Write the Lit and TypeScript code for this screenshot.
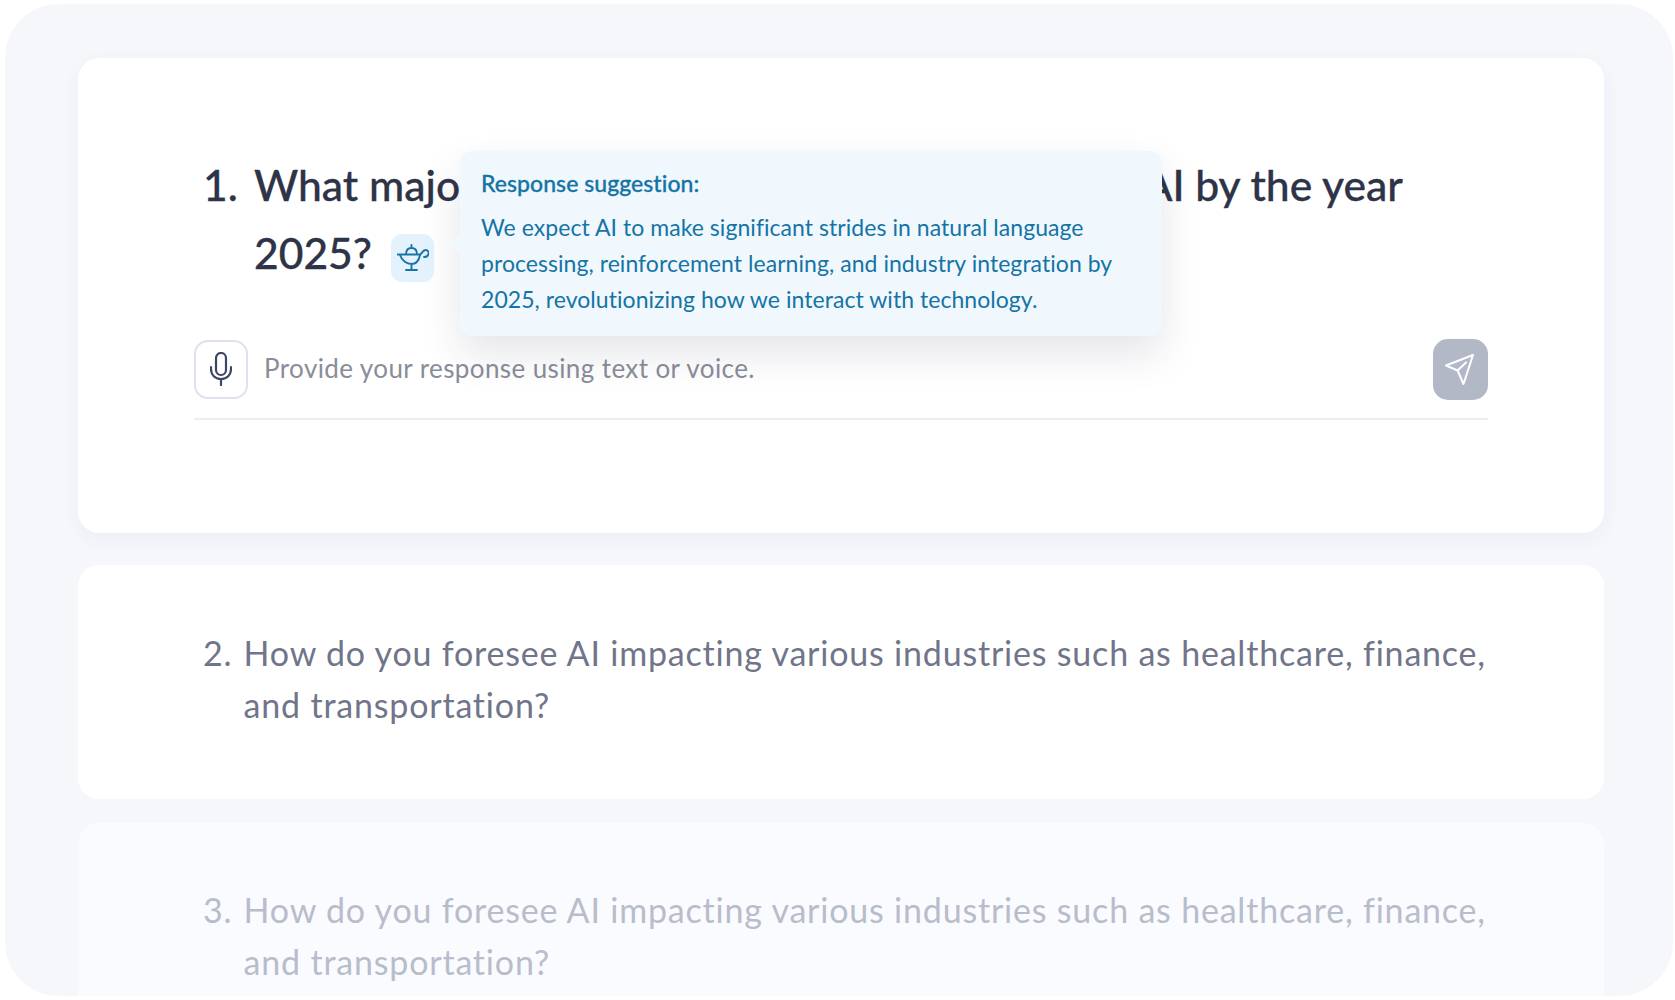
import { LitElement, html, css, svg } from "lit";
import { customElement } from "lit/decorators.js";

const lamp = svg`<path d="M0.5 10.5H23M3 11C5 17 10 20 14.5 20C19 20 22 16 23 11C25 9 26 6 28.5 6C31 6 32 8 31.5 10C31 12 29 13 27 13M9 10.5C9 6 11 4 14.5 4C18 4 20 6 20 10.5M14.5 4V1M14.5 20V26M9 26H20"/>`;
const mic = svg`<rect x="6" y="1" width="10" height="22" rx="5"/><path d="M1 15V17C1 23 5 27 11 27C17 27 21 23 21 17V15M11 27V33"/>`;
const send = svg`<path d="M28 1L1 11.5L12.6 16.5L18.5 30L28 1ZM12.6 16.5L21 8.5"/>`;

@customElement("app-root")
export class AppRoot extends LitElement {
  static styles = css`
    :host { display: block; width: 1675px; height: 1000px; background: #fff; font-family: "Lato", "Noto Sans", sans-serif; overflow: hidden; }
    .frame { box-sizing: border-box; margin: 4px 2px 0 5px; height: 992px; background: #f5f7fb; border-radius: 54px; overflow: hidden; padding: 54px 69px 0 73px; display: flex; flex-direction: column; }
    .card { background: #fff; border-radius: 21px; box-sizing: border-box; flex: none; }
    .active { position: relative; height: 475px; padding: 93px 116px 0 116px; box-shadow: 0 6px 20px rgba(40, 50, 90, .05); }
    .second { margin-top: 32px; height: 234px; padding: 62px 100px 0 125px; }
    .third { margin-top: 24px; height: 234px; padding: 61px 100px 0 125px; background: #fafbfe; }
    .q { display: grid; font-size: 34px; line-height: 52.4px; letter-spacing: .8px; color: #70758a; grid-template-columns: 40.6px 1fr; }
    .third .q { color: #b8bdcb; }
    .q1 { display: grid; grid-template-columns: 51px 1fr; padding-left: 9px; font-size: 42.6px; font-weight: 500; line-height: 68px; color: #2e3347; -webkit-text-stroke: .3px #2e3347; }
    .chip { display: inline-flex; align-items: center; justify-content: center; width: 43px; height: 48px; border-radius: 11px; background: #e3f2fc; margin-left: 19px; vertical-align: -2px; -webkit-text-stroke: 0; }
    .chip svg { width: 32px; height: 27px; fill: none; stroke: #1a73a8; stroke-width: 1.9; stroke-linecap: round; stroke-linejoin: round; }
    .input { display: flex; align-items: center; margin-top: 52px; padding-bottom: 19px; box-sizing: border-box; border-bottom: 2px solid #eceef2; height: 81px; }
    .mic { width: 54px; height: 59px; box-sizing: border-box; border: 2px solid #dde2ef; border-radius: 14px; display: flex; align-items: center; justify-content: center; }
    .mic svg { width: 22px; height: 34px; fill: none; stroke: #3e4663; stroke-width: 2.2; stroke-linecap: round; }
    .ph { flex: 1; margin-left: 16px; padding-bottom: 3px; font-size: 26px; letter-spacing: .4px; color: #8a8d99; }
    .send { width: 55px; height: 61px; border-radius: 15px; background: #b2b8c6; display: flex; align-items: center; justify-content: center; padding-right: 2px; box-sizing: border-box; }
    .send svg { width: 30px; height: 31px; fill: none; stroke: #fff; stroke-width: 2; stroke-linejoin: round; stroke-linecap: round; }
    .tip { position: absolute; left: 382px; top: 93px; width: 702px; height: 185px; box-sizing: border-box; padding: 15px 21px; background: #f0f8fe; border-radius: 12px; box-shadow: 0 18px 40px rgba(30, 40, 70, .12); color: #1474a5; font-size: 23px; line-height: 36px; letter-spacing: .05px; }
    .tip::before { content: ""; position: absolute; left: -7px; top: 85px; width: 16px; height: 16px; background: #f0f8fe; transform: rotate(45deg); border-radius: 3px; }
    .tip-title { font-weight: 500; margin-bottom: 9px; line-height: 34px; position: relative; -webkit-text-stroke: .3px #1474a5; }
    .tip-body { position: relative; }
  `;

  render() {
    return html`
      <div class="frame">
        <section class="card active">
          <div class="q1">
            <span>1.</span>
            <span>What major advancements do you anticipate in AI by the year 2025?<span class="chip"><svg viewBox="0 0 32 27">${lamp}</svg></span></span>
          </div>
          <div class="input">
            <div class="mic"><svg viewBox="0 0 22 34">${mic}</svg></div>
            <div class="ph">Provide your response using text or voice.</div>
            <div class="send"><svg viewBox="0 0 30 31">${send}</svg></div>
          </div>
          <div class="tip">
            <div class="tip-title">Response suggestion:</div>
            <div class="tip-body">We expect AI to make significant strides in natural language<br>processing, reinforcement learning, and industry integration by<br>2025, revolutionizing how we interact with technology.</div>
          </div>
        </section>
        <section class="card second">
          <div class="q"><span>2.</span><span>How do you foresee AI impacting various industries such as healthcare, finance, and transportation?</span></div>
        </section>
        <section class="card third">
          <div class="q"><span>3.</span><span>How do you foresee AI impacting various industries such as healthcare, finance, and transportation?</span></div>
        </section>
      </div>
    `;
  }
}
